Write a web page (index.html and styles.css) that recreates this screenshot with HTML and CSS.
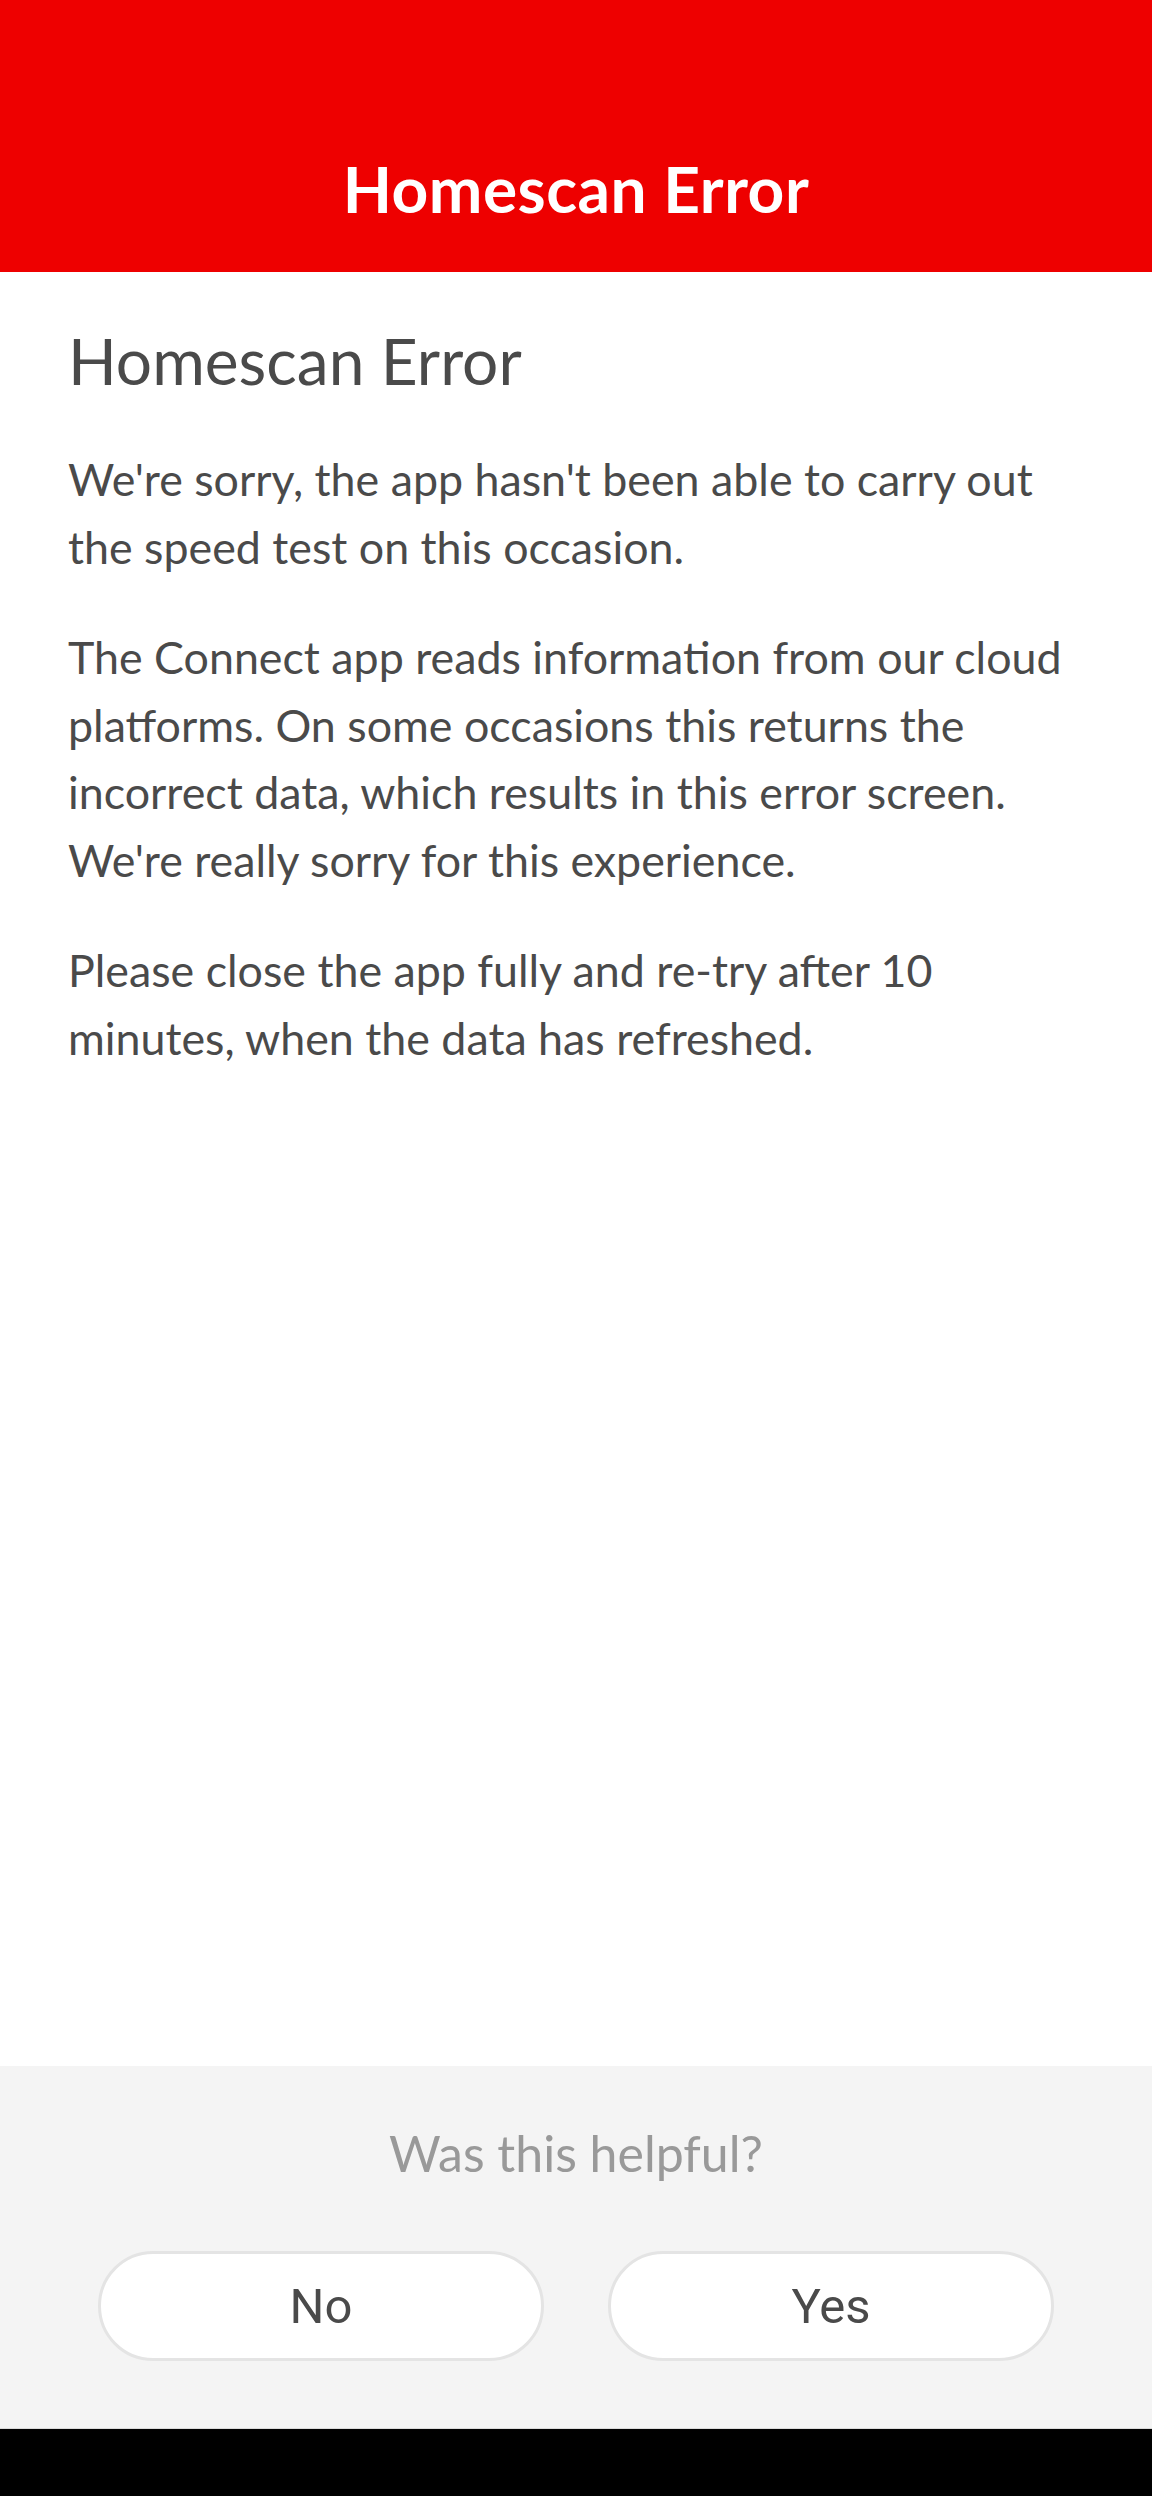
FILE: index.html
```html
<!DOCTYPE html>
<html lang="en">
<head>
<meta charset="utf-8">
<title>Homescan Error</title>
<link rel="stylesheet" href="styles.css">
</head>
<body>
<div class="screen">
  <header class="topbar">
    <h1 class="topbar-title">Homescan Error</h1>
  </header>
  <main class="content">
    <h2 class="heading">Homescan Error</h2>
    <p class="para">We're sorry, the app hasn't been able to carry out the speed test on this occasion.</p>
    <p class="para">The Connect app reads information from our cloud platforms. On some occasions this returns the incorrect data, which results in this error screen. We're really sorry for this experience.</p>
    <p class="para">Please close the app fully and re-try after 10 minutes, when the data has refreshed.</p>
  </main>
  <section class="feedback">
    <div class="feedback-q">Was this helpful?</div>
    <div class="feedback-btns">
      <button class="fb-btn" type="button">No</button>
      <button class="fb-btn" type="button">Yes</button>
    </div>
  </section>
  <div class="navbar"></div>
</div>
</body>
</html>
```
FILE: styles.css
```css
html, body {
  margin: 0;
  padding: 0;
  background: #ffffff;
}

.screen {
  width: 1152px;
  height: 2496px;
  display: flex;
  flex-direction: column;
  font-family: "Lato", "Open Sans", sans-serif;
}

.topbar {
  height: 272px;
  background: #ee0000;
  display: flex;
  align-items: flex-end;
  justify-content: center;
  padding-bottom: 47px;
  box-sizing: border-box;
}

.topbar-title {
  margin: 0;
  color: #ffffff;
  font-family: "Lato", sans-serif;
  font-weight: 700;
  font-size: 64px;
  line-height: 72px;
  letter-spacing: 0.5px;
}

.content {
  flex: 1;
  padding: 53px 80px 0 68px;
}

.heading {
  margin: 0 0 49px 0;
  font-weight: 400;
  font-size: 64px;
  line-height: 72px;
  color: #4a4a4a;
}

.para {
  margin: 0 0 43px 0;
  font-size: 44.75px;
  line-height: 67.5px;
  color: #4a4a4a;
}

.feedback {
  height: 363px;
  box-sizing: border-box;
  background: #f4f4f4;
  border-bottom: 1px solid #d9d9d9;
  padding: 57px 98px 0 98px;
  display: flex;
  flex-direction: column;
  align-items: center;
}

.feedback-q {
  font-size: 50px;
  line-height: 60px;
  color: #999999;
}

.feedback-btns {
  margin-top: 68px;
  display: flex;
  gap: 64px;
  width: 100%;
}

.fb-btn {
  flex: 1;
  height: 110px;
  background: #ffffff;
  border: 3px solid #e4e4e4;
  border-radius: 55px;
  font-family: "Roboto", "Liberation Sans", sans-serif;
  font-size: 49px;
  color: #4a4a4a;
  padding: 0;
}

.navbar {
  height: 67px;
  background: #000000;
}
```
